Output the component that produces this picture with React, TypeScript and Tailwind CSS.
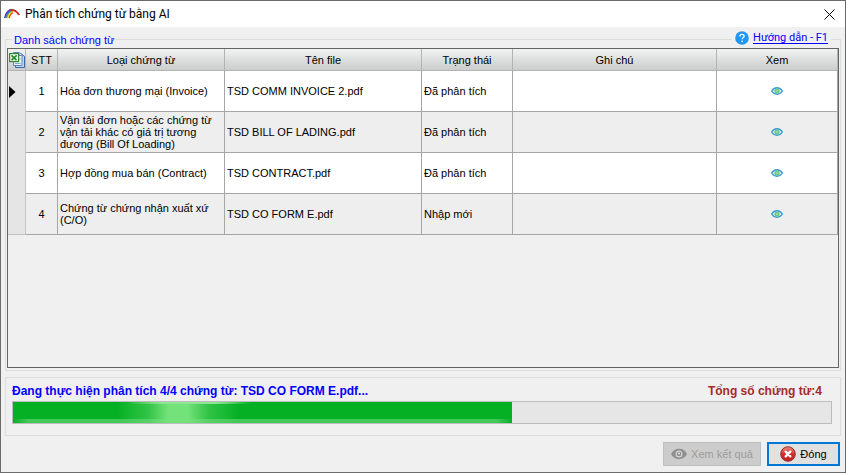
import { useState } from 'react'

interface DocumentRow {
  id: number
  type: string
  file: string
  status: string
  note: string
}

const documents: DocumentRow[] = [
  { id: 1, type: 'Hóa đơn thương mại (Invoice)', file: 'TSD COMM INVOICE 2.pdf', status: 'Đã phân tích', note: '' },
  { id: 2, type: 'Vận tải đơn hoặc các chứng từ vận tải khác có giá trị tương đương (Bill Of Loading)', file: 'TSD BILL OF LADING.pdf', status: 'Đã phân tích', note: '' },
  { id: 3, type: 'Hợp đồng mua bán (Contract)', file: 'TSD CONTRACT.pdf', status: 'Đã phân tích', note: '' },
  { id: 4, type: 'Chứng từ chứng nhận xuất xứ (C/O)', file: 'TSD CO FORM E.pdf', status: 'Nhập mới', note: '' }
]

const headers = ['STT', 'Loại chứng từ', 'Tên file', 'Trạng thái', 'Ghi chú', 'Xem']

function RainbowIcon() {
  return (
    <svg width="16" height="10" viewBox="0 0 16 10" fill="none" aria-hidden="true">
      <path d="M.6 9.200C1.500 5 3.500 1.800 6.500 1" stroke="#4a2fb8" strokeWidth="1.400" />
      <path d="M1.800 9.200C2.800 5.500 4.500 2.600 7 1.600" stroke="#2c6fd0" strokeWidth="1.200" />
      <path d="M2.800 9.200C3.700 6 5 3.600 7.500 2.400" stroke="#3fae3c" strokeWidth="1.100" />
      <path d="M3.900 9.200C4.500 6.500 6 3.800 9 2.900" stroke="#f7e018" strokeWidth="1.500" />
      <path d="M5.200 9.200C5.800 6.500 7 4.500 9 3.900" stroke="#ee3a1c" strokeWidth="1.200" />
      <path d="M5.500.9C9 .3 13 .8 15.300 6" stroke="#4a1010" strokeWidth="1" />
      <path d="M6.500 1.700C10 1 12.800 2 14.800 6" stroke="#e0241c" strokeWidth="1.600" />
    </svg>
  )
}

function ExcelIcon() {
  return (
    <svg width="16" height="17" viewBox="0 0 16 17" aria-hidden="true">
      <path d="M6.500 2.500H12l3.500 3v11h-9z" fill="#c3d6f2" stroke="#3f67a8" />
      <path d="M4.500 1.500h5.500l3 2.700v10.300H4.500z" fill="#eef4fc" stroke="#5c82bd" />
      <path d="M10 1.500v3h3" fill="#fff" stroke="#5c82bd" />
      <path d="M6 12.500h5.500M10.500 8h1.500" stroke="#7f9fd0" />
      <rect x=".6" y="2.600" width="9" height="8" fill="#f4fbf1" stroke="#2e8a31" strokeWidth="1.200" />
      <path d="M2.500 4.300l5 4.800M7.700 4.300L2.500 9.100" stroke="#2b8a2e" strokeWidth="1.800" />
    </svg>
  )
}

function RowEyeIcon() {
  return (
    <svg width="12" height="8" viewBox="0 0 12 8" aria-hidden="true">
      <path d="M.7 4C2 1.700 3.800.8 6 .8s4 .9 5.300 3.200C10 6.300 8.200 7.200 6 7.200S2 6.300.7 4z" fill="#dff3f4" stroke="#3c9bd3" strokeWidth="1.400" />
      <circle cx="6" cy="4" r="2.600" fill="#6cc884" />
      <circle cx="6" cy="4" r=".9" fill="#a5e0af" />
    </svg>
  )
}

function HelpIcon() {
  return (
    <svg width="14" height="14" viewBox="0 0 14 14" fill="none" aria-hidden="true">
      <circle cx="7" cy="7" r="6.800" fill="#2196f3" />
      <path d="M4.900 5.400c0-1.300.9-2 2.100-2s2.100.7 2.100 1.800c0 1.400-2 1.600-2 3.100" stroke="#fff" strokeWidth="1.300" />
      <circle cx="7.100" cy="10.300" r=".85" fill="#fff" />
    </svg>
  )
}

function ResultEyeIcon() {
  return (
    <svg width="16" height="12" viewBox="0 0 16 12" aria-hidden="true">
      <path d="M0 6C1.800 2.700 4.500.8 8 .8S14.200 2.700 16 6c-1.800 3.300-4.500 5.200-8 5.200S1.800 9.300 0 6z" fill="#8e8e8e" />
      <circle cx="8" cy="6" r="3.500" fill="#d6d6d6" />
      <circle cx="8" cy="6" r="2.300" fill="#8e8e8e" />
      <circle cx="8" cy="5.600" r="1" fill="#e6e6e6" />
    </svg>
  )
}

function CloseBadgeIcon() {
  return (
    <svg width="16" height="16" viewBox="0 0 16 16" fill="none" aria-hidden="true">
      <defs>
        <linearGradient id="closeBadge" x1="0" y1="0" x2="0" y2="1">
          <stop offset="0" stopColor="#ee8a82" />
          <stop offset=".5" stopColor="#cf2f2c" />
          <stop offset="1" stopColor="#c41c20" />
        </linearGradient>
      </defs>
      <circle cx="8" cy="8" r="7.300" fill="url(#closeBadge)" stroke="#963030" />
      <path d="M5.700 5.700l4.600 4.600M10.300 5.700l-4.600 4.600" stroke="#fff" strokeWidth="2.400" strokeLinecap="round" />
    </svg>
  )
}

function DocumentTable() {
  const [selected, setSelected] = useState(1)

  return (
    <table className="w-full table-fixed border-separate border-spacing-0 text-[11px] leading-[12px]">
      <colgroup>
        <col className="w-[18px]" />
        <col className="w-8" />
        <col className="w-[167px]" />
        <col className="w-[197px]" />
        <col className="w-[91px]" />
        <col />
        <col className="w-[121px]" />
      </colgroup>
      <thead>
        <tr className="h-[22px] bg-linear-to-b from-[#f1f2f2] to-[#c9cccb]">
          <th className="p-0 align-middle border-r border-b border-[#b4b4b4]">
            <button type="button" aria-label="Xuất Excel" className="flex w-full justify-center">
              <ExcelIcon />
            </button>
          </th>
          {headers.map(header => (
            <th key={header} className="p-0 font-normal border-r border-b border-[#b4b4b4]">
              {header}
            </th>
          ))}
        </tr>
      </thead>
      <tbody>
        {documents.map(doc => (
          <tr key={doc.id} onClick={() => setSelected(doc.id)} className="group h-[41px] odd:bg-white even:bg-[#eeeeee]">
            <td className="bg-[#e5e5e5] p-0 border-r border-[#c4c4c4] group-last:border-b">
              {selected === doc.id && (
                <svg width="7" height="12" viewBox="0 0 7 12" className="ml-px" aria-hidden="true">
                  <path d="M0 0l6.500 6L0 12z" fill="#000" />
                </svg>
              )}
            </td>
            <td className="p-0 text-center border-r border-b border-[#a6a6a6]">{doc.id}</td>
            <td className="px-0.5 py-0 border-r border-b border-[#a6a6a6]">{doc.type}</td>
            <td className="px-0.5 py-0 border-r border-b border-[#a6a6a6]">{doc.file}</td>
            <td className="px-0.5 py-0 border-r border-b border-[#a6a6a6]">{doc.status}</td>
            <td className="px-0.5 py-0 border-r border-b border-[#a6a6a6]">{doc.note}</td>
            <td className="p-0 border-r border-b border-[#a6a6a6]">
              <button type="button" aria-label={`Xem ${doc.file}`} className="mx-auto block">
                <RowEyeIcon />
              </button>
            </td>
          </tr>
        ))}
      </tbody>
    </table>
  )
}

function ProgressBar({ value }: { value: number }) {
  return (
    <div
      role="progressbar"
      aria-label="Tiến độ phân tích"
      aria-valuenow={value}
      className="h-[23px] border border-[#bcbcbc] bg-[#e6e6e6]"
    >
      <div className="relative h-full bg-[#06b025]" style={{ width: `${value}%` }}>
        <div className="absolute inset-x-0 bottom-0 h-1 bg-[linear-gradient(90deg,transparent,#43c85a_3%,#43c85a_97%,transparent)]" />
        {/* Moving highlight */}
        <div className="absolute inset-y-0 left-[21%] w-[24%] bg-[linear-gradient(90deg,transparent,#74e27a66_25%,#74e27a_42%,#74e27a_58%,#74e27a66_75%,transparent)]" />
        <div className="absolute top-0 left-[23%] h-0.5 w-[25%] bg-[linear-gradient(90deg,transparent,#8fe795_30%,#8fe795_70%,transparent)]" />
      </div>
    </div>
  )
}

export default function App() {
  return (
    <div className="flex min-h-screen flex-col border border-[#6b6b6b] bg-[#f0f0f0] font-['Liberation_Sans',Arial,sans-serif] text-[11px] text-black">
      <header className="flex h-[26px] items-center bg-white pr-2.5 pl-[3px]">
        <RainbowIcon />
        <h1 className="ml-[5px] flex-1 font-[Roboto,'Segoe_UI',sans-serif] text-xs">Phân tích chứng từ bằng AI</h1>
        <button type="button" aria-label="Đóng cửa sổ">
          <svg width="11" height="11" viewBox="0 0 11 11" stroke="#000" aria-hidden="true">
            <path d="M.5.5l10 10M10.500.5l-10 10" />
          </svg>
        </button>
      </header>

      <main className="flex flex-1 flex-col px-1 pt-3">
        <section aria-labelledby="documents" className="flex flex-1 flex-col border border-[#dcdcdc] px-px pb-0.5">
          {/* Caption and help link break the top border of the group */}
          <div className="-mt-2 flex h-4 justify-between pr-2 pl-[5px]">
            <h2 id="documents" className="bg-[#f0f0f0] px-0.5 leading-4 text-[#0000ff]">Danh sách chứng từ</h2>
            <div className="flex h-3 items-center gap-1 bg-[#f0f0f0] px-[3px]">
              <HelpIcon />
              <a href="#help" className="font-[Roboto,'Segoe_UI',sans-serif] text-[11px] leading-3 text-[#0000ff] underline underline-offset-2">Hướng dẫn - F1</a>
            </div>
          </div>
          <div className="flex-1 border border-[#646464]">
            <DocumentTable />
          </div>
        </section>

        <section className="mt-1.5 border border-[#dcdcdc] pt-1.5 pr-2 pb-[11px] pl-1.5">
          <div className="mb-0.5 flex justify-between pr-2.5 text-xs leading-[15px] font-bold">
            <p className="text-[#0000ff]">Đang thực hiện phân tích 4/4 chứng từ: TSD CO FORM E.pdf...</p>
            <p className="text-[#a52a2a]">Tổng số chứng từ:4</p>
          </div>
          <ProgressBar value={61} />
        </section>
      </main>

      <footer className="flex justify-end gap-1.5 px-[5px] py-1.5">
        <button
          type="button"
          disabled
          className="flex h-6 w-[98px] items-center justify-center gap-1 border border-[#bfbfbf] bg-[#cccccc] text-[#9c9c9c]"
        >
          <ResultEyeIcon />
          Xem kết quả
        </button>
        <button
          type="button"
          className="flex h-6 w-[73px] items-center justify-center gap-1 border-2 border-[#0078d7] bg-[#e1e1e1]"
        >
          <CloseBadgeIcon />
          Đóng
        </button>
      </footer>
    </div>
  )
}
